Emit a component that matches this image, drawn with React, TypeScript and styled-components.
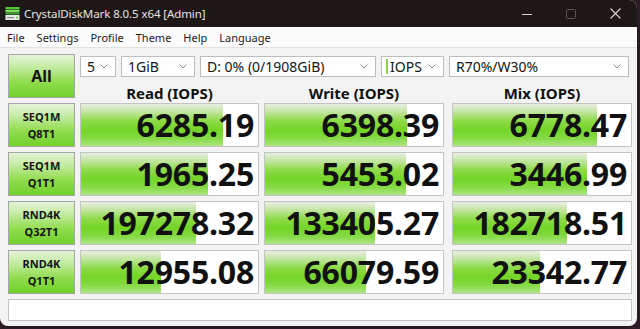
import React from 'react';
import styled, { createGlobalStyle } from 'styled-components';

const GlobalStyle = createGlobalStyle`
  html, body {
    margin: 0;
    padding: 0;
    background: #2a1b24;
  }
  * {
    box-sizing: border-box;
  }
`;

const FONT = `"Noto Sans", "Open Sans", "DejaVu Sans", sans-serif`;

const Window = styled.div`
  width: 637px;
  height: 326px;
  background: #f3f3f3;
  border-radius: 0 8px 8px 8px;
  overflow: hidden;
  font-family: ${FONT};
  color: #111;
`;

const TitleBar = styled.div`
  height: 27px;
  background: #1e1717;
  display: flex;
  align-items: center;
  padding-left: 5px;
`;

const TitleText = styled.span`
  margin-left: 4px;
  font-size: 11.5px;
  color: #e6e2e2;
  letter-spacing: -0.1px;
  flex: 1;
`;

const Controls = styled.div`
  display: flex;
  height: 100%;
`;

const ControlButton = styled.div<{ $dim?: boolean }>`
  width: 44px;
  height: 100%;
  display: flex;
  align-items: center;
  justify-content: center;
  color: ${({ $dim }) => ($dim ? '#5c5656' : '#d8d4d4')};
`;

const MenuBar = styled.div`
  height: 21px;
  background: #fbfbfb;
  border-bottom: 1px solid #e2e2e2;
  display: flex;
  align-items: center;
  gap: 12px;
  padding-left: 7px;
  font-size: 11px;
  color: #1b1b1b;
`;

const MenuItem = styled.span``;

const Body = styled.div`
  padding: 6px 0 0 8px;
  display: flex;
  flex-direction: column;
  gap: 5px;
`;

const Row = styled.div`
  display: grid;
  grid-template-columns: 67px 179px 180px 183px;
  column-gap: 5px;
  height: 44px;
`;

const TopRow = styled(Row)`
  grid-template-rows: 23px 21px;
`;

const GreenButton = styled.div<{ $big?: boolean }>`
  grid-row: 1 / span 2;
  height: 44px;
  border: 1px solid #a5a5a5;
  background: linear-gradient(
    to bottom,
    #e4f3d7 0%,
    #c2ea9f 30%,
    #8fdc4c 65%,
    #72d12c 100%
  );
  display: flex;
  flex-direction: column;
  align-items: center;
  justify-content: center;
  font-weight: 700;
  font-size: ${({ $big }) => ($big ? '16px' : '11px')};
  line-height: ${({ $big }) => ($big ? '20px' : '17px')};
  color: #151515;
`;

const ComboStrip = styled.div`
  grid-column: 2 / span 3;
  display: flex;
  gap: 5px;
  padding-top: 2px;
`;

const Combo = styled.div<{ $w: number; $push?: boolean }>`
  width: ${({ $w }) => $w}px;
  height: 21px;
  margin-left: ${({ $push }) => ($push ? 'auto' : '0')};
  margin-right: ${({ $push }) => ($push ? '3px' : '0')};
  background: #fff;
  border: 1px solid #bdbdbd;
  display: flex;
  align-items: center;
  padding: 0 7px 0 6px;
  font-size: 14px;
  color: #151515;
`;

const ComboText = styled.span`
  flex: 1;
  white-space: nowrap;
`;

const Caret = styled.span`
  width: 2px;
  height: 15px;
  background: #8fd05a;
  margin: 0 2px 0 -2px;
`;

const Header = styled.div<{ $shift?: number }>`
  text-align: center;
  font-weight: 700;
  font-size: 15px;
  line-height: 16px;
  padding-top: 8px;
  margin-left: ${({ $shift }) => $shift || 0}px;
  white-space: nowrap;
`;

const Cell = styled.div<{ $shift?: number }>`
  position: relative;
  height: 44px;
  width: ${({ $shift }) => ($shift ? '180px' : 'auto')};
  margin-left: ${({ $shift }) => $shift || 0}px;
  background: #fff;
  border: 1px solid #c4c4c4;
  display: flex;
  align-items: center;
  justify-content: flex-end;
  padding-right: 4px;
  overflow: hidden;
`;

const Fill = styled.div`
  position: absolute;
  left: 0;
  top: 0;
  bottom: 0;
  background: linear-gradient(
    to bottom,
    #e9eee3 0%,
    #c4e6a4 18%,
    #8edb48 40%,
    #74d526 62%,
    #86da45 82%,
    #aee584 100%
  );
`;

const Value = styled.span`
  position: relative;
  font-weight: 700;
  font-size: 32px;
  line-height: 1;
  color: #111;
  letter-spacing: -0.2px;
`;

const StatusBar = styled.div`
  width: 624px;
  height: 22px;
  background: #fff;
  border: 1px solid #c4c4c4;
`;

const Chevron = () => (
  <svg width="8" height="5" viewBox="0 0 8 5">
    <path d="M0.5 0.5 L4 4 L7.5 0.5" fill="none" stroke="#8a8a8a" strokeWidth="1" />
  </svg>
);

const AppIcon = () => (
  <svg width="15" height="15" viewBox="0 0 15 15">
    <rect x="0.5" y="1" width="14" height="2.5" fill="#4fc832" />
    <rect x="0.5" y="4" width="14" height="2.5" fill="#7ee05a" />
    <rect x="0.5" y="7" width="14" height="1.5" fill="#3aa828" />
    <rect x="0.5" y="9" width="14" height="5" fill="#e8e8e8" />
    <rect x="2" y="11" width="7" height="1.2" fill="#8a8a8a" />
    <rect x="11" y="10.8" width="2" height="1.6" fill="#5cc83a" />
  </svg>
);

type Result = { value: string; fill: number };

const rows: { label: [string, string]; results: Result[] }[] = [
  {
    label: ['SEQ1M', 'Q8T1'],
    results: [
      { value: '6285.19', fill: 0.8 },
      { value: '6398.39', fill: 0.8 },
      { value: '6778.47', fill: 0.81 },
    ],
  },
  {
    label: ['SEQ1M', 'Q1T1'],
    results: [
      { value: '1965.25', fill: 0.715 },
      { value: '5453.02', fill: 0.79 },
      { value: '3446.99', fill: 0.755 },
    ],
  },
  {
    label: ['RND4K', 'Q32T1'],
    results: [
      { value: '197278.32', fill: 0.65 },
      { value: '133405.27', fill: 0.62 },
      { value: '182718.51', fill: 0.64 },
    ],
  },
  {
    label: ['RND4K', 'Q1T1'],
    results: [
      { value: '12955.08', fill: 0.45 },
      { value: '66079.59', fill: 0.57 },
      { value: '23342.77', fill: 0.49 },
    ],
  },
];

const menu = ['File', 'Settings', 'Profile', 'Theme', 'Help', 'Language'];

export default function App() {
  return (
    <>
      <GlobalStyle />
      <Window>
        <TitleBar>
          <AppIcon />
          <TitleText>CrystalDiskMark 8.0.5 x64 [Admin]</TitleText>
          <Controls>
            <ControlButton>
              <svg width="10" height="10" viewBox="0 0 10 10">
                <path d="M0 5.5 H10" stroke="currentColor" strokeWidth="1" />
              </svg>
            </ControlButton>
            <ControlButton $dim>
              <svg width="10" height="10" viewBox="0 0 10 10">
                <rect x="0.5" y="0.5" width="9" height="9" rx="1" fill="none" stroke="currentColor" />
              </svg>
            </ControlButton>
            <ControlButton>
              <svg width="11" height="11" viewBox="0 0 11 11">
                <path d="M0.5 0.5 L10.5 10.5 M10.5 0.5 L0.5 10.5" stroke="currentColor" strokeWidth="1.1" />
              </svg>
            </ControlButton>
          </Controls>
        </TitleBar>
        <MenuBar>
          {menu.map((m) => (
            <MenuItem key={m}>{m}</MenuItem>
          ))}
        </MenuBar>
        <Body>
          <TopRow>
            <GreenButton $big>All</GreenButton>
            <ComboStrip>
              <Combo $w={36}>
                <ComboText>5</ComboText>
                <Chevron />
              </Combo>
              <Combo $w={74}>
                <ComboText>1GiB</ComboText>
                <Chevron />
              </Combo>
              <Combo $w={176}>
                <ComboText>D: 0% (0/1908GiB)</ComboText>
                <Chevron />
              </Combo>
              <Combo $w={63}>
                <Caret />
                <ComboText>IOPS</ComboText>
                <Chevron />
              </Combo>
              <Combo $w={180} $push>
                <ComboText>R70%/W30%</ComboText>
                <Chevron />
              </Combo>
            </ComboStrip>
            <Header>Read (IOPS)</Header>
            <Header>Write (IOPS)</Header>
            <Header $shift={3}>Mix (IOPS)</Header>
          </TopRow>
          {rows.map((r) => (
            <Row key={r.label.join()}>
              <GreenButton>
                <span>{r.label[0]}</span>
                <span>{r.label[1]}</span>
              </GreenButton>
              {r.results.map((res, i) => (
                <Cell key={i} $shift={i === 2 ? 3 : 0}>
                  <Fill style={{ width: `${res.fill * 100}%` }} />
                  <Value>{res.value}</Value>
                </Cell>
              ))}
            </Row>
          ))}
          <StatusBar />
        </Body>
      </Window>
    </>
  );
}
